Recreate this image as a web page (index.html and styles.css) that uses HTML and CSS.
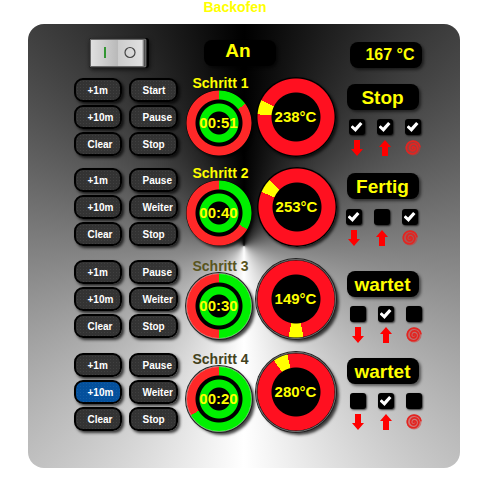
FILE: index.html
```html
<!DOCTYPE html>
<html lang="de">
<head>
<meta charset="utf-8">
<title>Backofen</title>
<link rel="stylesheet" href="styles.css">
</head>
<body>
<svg class="defs" aria-hidden="true">
  <symbol id="down" viewBox="0 0 16 16"><path fill="#f00" d="M5 0h6v9h3L8 16 2 9h3z"/></symbol>
  <symbol id="up" viewBox="0 0 16 16"><path fill="#f00" d="M5 16h6V7h3L8 0 2 7h3z"/></symbol>
  <symbol id="swirl" viewBox="0 0 16 16">
    <circle cx="8" cy="8" r="7.5" fill="#d9302c" opacity=".5"/>
    <path fill="none" stroke="#e32420" stroke-width="1.7" stroke-linecap="round" d="M8 8.6C7 8.5 7 7 8.3 6.8 10 6.600 10.600 8.600 9.700 9.900 8.400 11.500 5.600 11 4.900 9 4.100 6.400 5.800 4 8.300 3.900 11.500 3.800 13.400 6.800 12.600 9.800 11.800 12.600 9 14.200 6 13.600 2.800 12.900.9 10 1.300 6.900 1.800 3.400 4.800 1 8.200 1.200 11.600 1.400 14.200 3.600 14.900 6.600"/>
  </symbol>
</svg>
<h1 class="title">Backofen</h1>
<main class="panel">
  <header class="head">
    <button class="power" type="button" role="switch" aria-checked="true" aria-label="Ein/Aus">
      <svg viewBox="0 0 60 30">
        <defs>
          <linearGradient id="on"><stop offset="0" stop-color="#e0e0e0"/><stop offset="1" stop-color="#b9b9b9"/></linearGradient>
          <linearGradient id="off"><stop offset="0" stop-color="#ccc"/><stop offset="1" stop-color="#e0e0e0"/></linearGradient>
          <linearGradient id="edge"><stop offset="0" stop-color="#ddd"/><stop offset="1" stop-color="#333"/></linearGradient>
        </defs>
        <rect width="60" height="30" rx="3" fill="#000"/>
        <rect x="1" y="1" width="56" height="28" rx="1" fill="#555" stroke="#999" stroke-width=".6"/>
        <rect x="2" y="2" width="27" height="26" fill="url(#on)"/>
        <rect x="29" y="2" width="24" height="26" fill="url(#off)"/>
        <rect x="53" y="2" width="3" height="26" fill="url(#edge)"/>
        <rect x="15" y="9" width="2" height="11" fill="#329632"/>
        <circle cx="41" cy="14.500" r="5" fill="none" stroke="#444" stroke-width="1.200"/>
      </svg>
    </button>
    <output class="display display--state">An</output>
    <output class="display display--temp">167 °C</output>
  </header>

  <section class="step">
    <div class="keys">
      <button type="button">+1m</button><button type="button">Start</button>
      <button type="button">+10m</button><button type="button">Pause</button>
      <button type="button">Clear</button><button type="button">Stop</button>
    </div>
    <div class="timer">
      <h2>Schritt 1</h2>
      <div class="clock clock--51"><span>00:51</span></div>
    </div>
    <div class="heat heat--238"><span>238°C</span></div>
    <div class="side">
      <output class="display">Stop</output>
      <div class="modes">
        <label><input type="checkbox" aria-label="Unterhitze" checked><svg><use href="#down"/></svg></label>
        <label><input type="checkbox" aria-label="Oberhitze" checked><svg><use href="#up"/></svg></label>
        <label><input type="checkbox" aria-label="Umluft" checked><svg><use href="#swirl"/></svg></label>
      </div>
    </div>
  </section>

  <section class="step step--second">
    <div class="keys">
      <button type="button">+1m</button><button type="button">Pause</button>
      <button type="button">+10m</button><button type="button">Weiter</button>
      <button type="button">Clear</button><button type="button">Stop</button>
    </div>
    <div class="timer">
      <h2>Schritt 2</h2>
      <div class="clock clock--40"><span>00:40</span></div>
    </div>
    <div class="heat heat--253"><span>253°C</span></div>
    <div class="side">
      <output class="display">Fertig</output>
      <div class="modes">
        <label><input type="checkbox" aria-label="Unterhitze" checked><svg><use href="#down"/></svg></label>
        <label><input type="checkbox" aria-label="Oberhitze"><svg><use href="#up"/></svg></label>
        <label><input type="checkbox" aria-label="Umluft" checked><svg><use href="#swirl"/></svg></label>
      </div>
    </div>
  </section>

  <section class="step step--third step--waiting">
    <div class="keys">
      <button type="button">+1m</button><button type="button">Pause</button>
      <button type="button">+10m</button><button type="button">Weiter</button>
      <button type="button">Clear</button><button type="button">Stop</button>
    </div>
    <div class="timer">
      <h2>Schritt 3</h2>
      <div class="clock clock--30"><span>00:30</span></div>
    </div>
    <div class="heat heat--149"><span>149°C</span></div>
    <div class="side">
      <output class="display">wartet</output>
      <div class="modes">
        <label><input type="checkbox" aria-label="Unterhitze"><svg><use href="#down"/></svg></label>
        <label><input type="checkbox" aria-label="Oberhitze" checked><svg><use href="#up"/></svg></label>
        <label><input type="checkbox" aria-label="Umluft"><svg><use href="#swirl"/></svg></label>
      </div>
    </div>
  </section>

  <section class="step step--fourth step--waiting">
    <div class="keys">
      <button type="button">+1m</button><button type="button">Pause</button>
      <button type="button" class="pressed">+10m</button><button type="button">Weiter</button>
      <button type="button">Clear</button><button type="button">Stop</button>
    </div>
    <div class="timer">
      <h2>Schritt 4</h2>
      <div class="clock clock--20"><span>00:20</span></div>
    </div>
    <div class="heat heat--280"><span>280°C</span></div>
    <div class="side">
      <output class="display">wartet</output>
      <div class="modes">
        <label><input type="checkbox" aria-label="Unterhitze"><svg><use href="#down"/></svg></label>
        <label><input type="checkbox" aria-label="Oberhitze" checked><svg><use href="#up"/></svg></label>
        <label><input type="checkbox" aria-label="Umluft"><svg><use href="#swirl"/></svg></label>
      </div>
    </div>
  </section>
</main>
</body>
</html>
```

FILE: styles.css
```css
* {
  box-sizing: border-box;
}

body {
  margin: 0;
  background: #fff;
  color: #ff0;
  font: bold 15px/1 "Liberation Sans", Arial, sans-serif;
}

.defs {
  display: none;
}

.title {
  margin: 0 13px 0 0;
  font-size: 14px;
  line-height: 14px;
  text-align: center;
}

.panel {
  margin: 10px 23px 20px 28px;
  padding: 14px 0 36px 6px;
  border-radius: 16px;
  background: conic-gradient(#000, #fff 180deg, #000);
}

.head,
.step {
  display: grid;
  justify-content: center;
  align-items: start;
}

.head {
  grid-template-columns: 60px 72px 1fr;
  column-gap: 55px;
  margin: 0 38px 0 55px;
}

.power {
  width: 60px;
  height: 30px;
  padding: 0;
  border: 0;
  background: none;
  filter: drop-shadow(1px 2px 2px #0009);
}

.power svg {
  display: block;
}

.display {
  display: block;
  width: 72px;
  height: 26px;
  border-radius: 8px;
  background: #000;
  box-shadow: 2px 2px 3px #0008;
  font-size: 19px;
  line-height: 28px;
  text-align: center;
}

.display--state {
  margin-top: 2px;
  padding-right: 4px;
  line-height: 22px;
}

.display--temp {
  justify-self: end;
  margin-top: 4px;
  padding-left: 8px;
  font-size: 16px;
  line-height: 25px;
}

.step {
  grid-template-columns: 104px 66px 80px 73px;
  column-gap: 8px;
  height: 80px;
  margin-top: 13px;
}

.head + .step {
  margin-top: 9px;
}

.step--second {
  margin-top: 10px;
}

.step--third {
  margin-top: 12px;
}

.keys {
  display: grid;
  grid-template-columns: 48px 49px;
  grid-auto-rows: 24px;
  gap: 3px 7px;
  padding-top: 1px;
}

.keys button {
  padding: 1px 0 0 12px;
  border: 2px solid #000;
  border-radius: 9px;
  background: radial-gradient(#404040 1px, #333 1px) 0 0 / 3px 3px;
  box-shadow: 2px 2px 3px #000b;
  color: #fff;
  font: bold 10px/20px "Liberation Sans", Arial, sans-serif;
  text-align: left;
  white-space: nowrap;
}

.keys .pressed {
  background: radial-gradient(#125ba3 1px, #04509c 1px) 0 0 / 3px 3px;
}

.timer h2 {
  margin: 0 0 1px;
  padding-left: 4px;
  font-size: 14px;
  line-height: 12px;
  text-align: center;
  white-space: nowrap;
}

.step--waiting h2 {
  margin: 0;
  line-height: 14px;
}

.step--third h2 {
  color: #59551f;
}

.step--fourth h2 {
  color: #43421c;
}

.clock,
.heat {
  display: grid;
  place-items: center;
  padding-bottom: 2px;
  border-radius: 50%;
  box-shadow: 2px 2px 3px #000b;
  white-space: nowrap;
}

.clock {
  width: 66px;
  height: 66px;
}

.heat {
  width: 80px;
  height: 80px;
  margin-left: -4px;
}

.step--second .heat {
  margin-left: -3px;
}

.step--waiting .clock,
.step--waiting .heat {
  box-shadow: 0 0 0 1px #222, 3px 3px 3px #000b;
  outline: 1px solid #fff6;
  outline-offset: -1px;
}

.clock--51 { --end: 54deg; }
.clock--40 { --end: 120deg; }
.clock--30 { --end: 180deg; }
.clock--20 { --end: 240deg; }

.clock {
  background:
    radial-gradient(circle, #000 11px, #00f000 12px 19px, #000 20px 23px, #0000 24px 32px, #000 33px),
    conic-gradient(#00f000 var(--end), #ff2828 0);
}

.heat--238 { --from: 274deg; }
.heat--253 { --from: 293deg; }
.heat--149 { --from: 169deg; }
.heat--280 { --from: 325deg; }

.heat {
  background:
    radial-gradient(circle, #000 24px, #0000 25px 38px, #000 39px),
    conic-gradient(from var(--from), #ff0 22deg, #ff1020 0);
}

.side {
  margin-left: -1px;
  padding-top: 7px;
}

.modes {
  display: flex;
  gap: 12px;
  margin: 9px 0 0 2px;
}

.step--second .side {
  padding-top: 6px;
}

.step--second .modes {
  margin: 10px 0 0 -1px;
}

.step--third .side {
  padding-top: 12px;
}

.step--fourth .side {
  padding-top: 6px;
}

.step--waiting .modes {
  margin-left: 3px;
}

.modes label {
  display: grid;
  gap: 5px;
}

.modes input {
  display: grid;
  place-items: center;
  width: 16px;
  height: 16px;
  margin: 0;
  border-radius: 3px;
  appearance: none;
  background: #000;
  box-shadow: 1px 1px 2px #000b;
}

.modes input:checked::before {
  content: "";
  width: 12px;
  height: 10px;
  background: #fff;
  clip-path: polygon(0 52%, 18% 32%, 38% 54%, 80% 0, 100% 20%, 42% 100%);
}

.modes svg {
  width: 16px;
  height: 16px;
}
```
